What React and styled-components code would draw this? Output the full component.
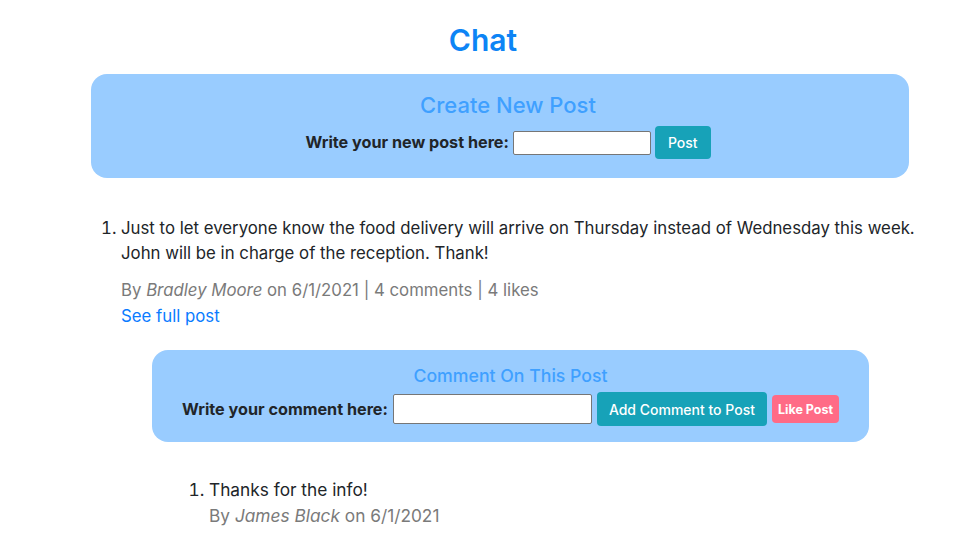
import React from "react";
import styled, { createGlobalStyle } from "styled-components";

const Global = createGlobalStyle`
  html, body { margin: 0; padding: 0; background: #fff; }
  body {
    font-family: Inter, "Noto Sans", sans-serif;
    font-size: 16.8px;
    line-height: 1.5;
    color: #212529;
  }
  * { box-sizing: border-box; }
`;

const Page = styled.div`
  width: 966px;
  padding: 20px 0 0 0;
`;

const Title = styled.h1`
  margin: 0;
  text-align: center;
  font-size: 30px;
  font-weight: 600;
  line-height: 40px;
  color: #0d84f5;
`;

const Panel = styled.div`
  background: #99ccff;
  border-radius: 16px;
  display: flex;
  flex-direction: column;
  align-items: center;
  margin: ${(p) => p.$margin};
  padding: ${(p) => p.$padding};
`;

const PanelTitle = styled.h3`
  margin: 0;
  font-weight: 500;
  color: #3fa0ff;
  font-size: ${(p) => p.$size}px;
  line-height: ${(p) => p.$lh}px;
`;

const FormRow = styled.div`
  display: flex;
  align-items: center;
  gap: ${(p) => p.$gap || 4}px;
  margin-top: ${(p) => p.$mt || 0}px;
`;

const Label = styled.label`
  font-weight: 700;
  font-size: 16.2px;
  color: #212529;
`;

const Input = styled.input`
  width: ${(p) => p.$w}px;
  height: ${(p) => p.$h}px;
  border: 1px solid #767676;
  border-radius: 2px;
  background: #fff;
  margin: 0;
`;

const Button = styled.button`
  border: none;
  border-radius: 4px;
  color: #fff;
  font-family: inherit;
  cursor: pointer;
  background: ${(p) => (p.$variant === "like" ? "#ff6b86" : "#17a2b8")};
  font-size: ${(p) => (p.$variant === "like" ? 12.5 : 14)}px;
  font-weight: ${(p) => (p.$variant === "like" ? 700 : 500)};
  height: ${(p) => p.$h}px;
  padding: 0 ${(p) => p.$px}px;
`;

const PostList = styled.ol`
  margin: 38px 36px 0 0;
  padding-left: 121px;
`;

const Body = styled.div`
  line-height: 25px;
`;

const Meta = styled.div`
  color: #7a7a7a;
  margin-top: ${(p) => p.$mt || 0}px;
  line-height: 26px;
  em { font-style: italic; }
`;

const Link = styled.a`
  color: #0a7cff;
  text-decoration: none;
  display: block;
  line-height: 26px;
`;

const CommentList = styled.ol`
  margin: 35px 0 0 0;
  padding-left: 88px;
  font-size: 17.3px;
`;

const CommentText = styled.div`
  line-height: 26px;
`;

export default function App() {
  return (
    <>
      <Global />
      <Page>
        <Title>Chat</Title>
        <Panel $margin="14px 57px 0 91px" $padding="16px 0 19px 16px">
          <PanelTitle $size={22} $lh={30}>Create New Post</PanelTitle>
          <FormRow $gap={4} $mt={6}>
            <Label>Write your new post here:</Label>
            <Input $w={138} $h={24} />
            <Button $h={33} $px={13}>Post</Button>
          </FormRow>
        </Panel>
        <PostList>
          <li>
            <Body>
              Just to let everyone know the food delivery will arrive on Thursday instead of Wednesday this week. John will be in charge of the reception. Thank!
            </Body>
            <Meta $mt={11}>
              By <em>Bradley Moore</em> on 6/1/2021 | 4 comments | 4 likes
            </Meta>
            <Link href="#">See full post</Link>
            <Panel $margin="21px 61px 0 31px" $padding="13px 0 16px 0">
              <PanelTitle $size={17.7} $lh={26}>Comment On This Post</PanelTitle>
              <FormRow $gap={5} $mt={3}>
                <Label>Write your comment here:</Label>
                <Input $w={199} $h={30} />
                <Button $h={34} $px={12}>Add Comment to Post</Button>
                <Button $variant="like" $h={28} $px={6}>Like Post</Button>
              </FormRow>
            </Panel>
            <CommentList>
              <li>
                <CommentText>Thanks for the info!</CommentText>
                <Meta>
                  By <em>James Black</em> on 6/1/2021
                </Meta>
              </li>
            </CommentList>
          </li>
        </PostList>
      </Page>
    </>
  );
}
